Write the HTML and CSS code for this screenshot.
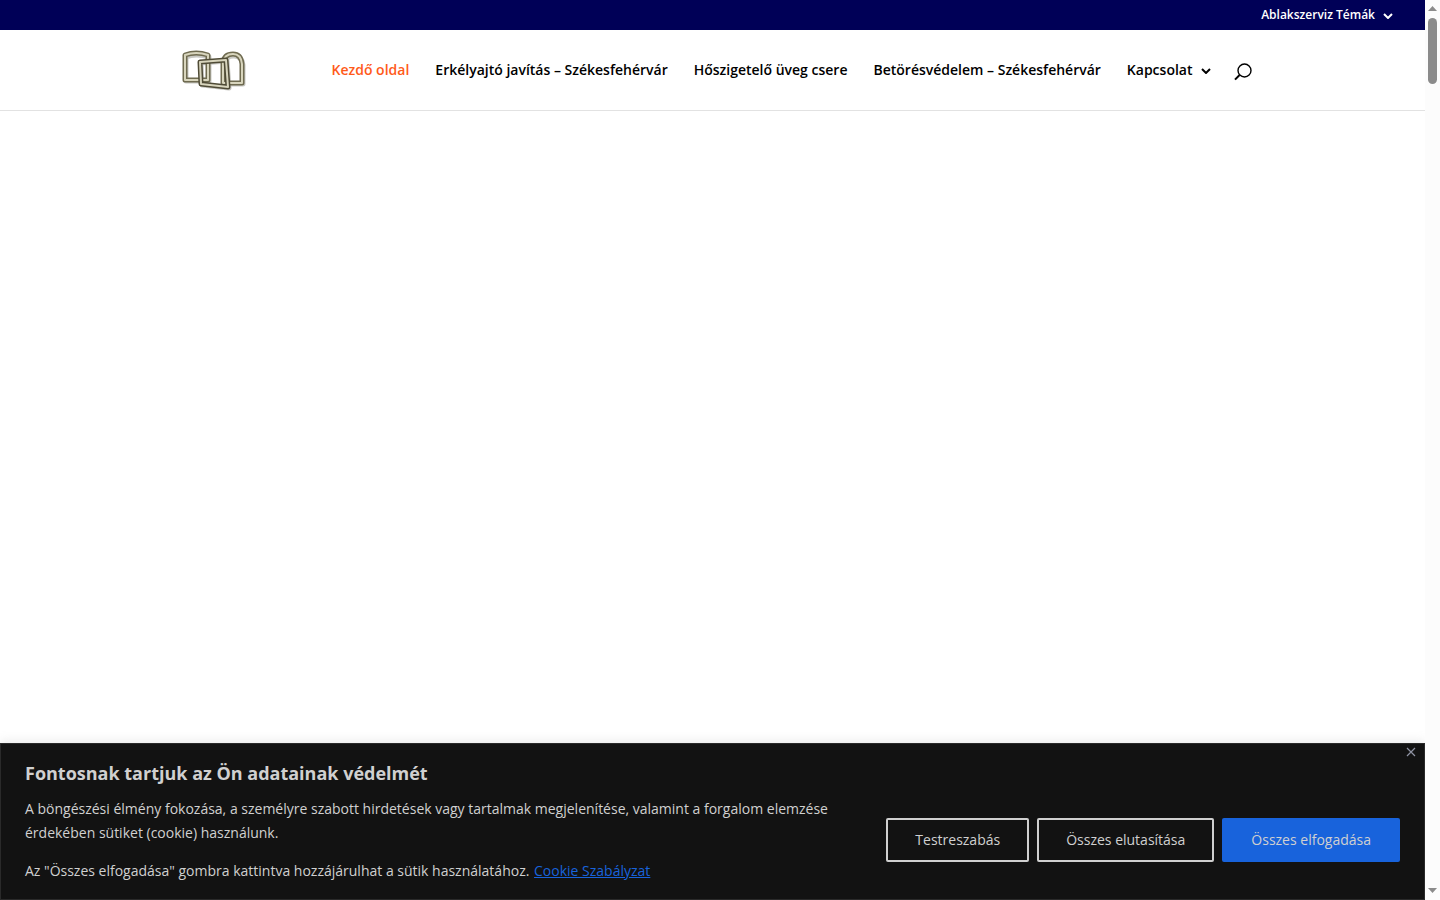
FILE: index.html
```
<!DOCTYPE html>
<html lang="hu">
<head>
  <meta charset="UTF-8" />
  <meta name="viewport" content="width=device-width, initial-scale=1.0" />
  <title>Ablakszerviz - Kezdő oldal</title>
  <link rel="stylesheet" href="styles.css">
</head>
<body>
  <div class="page">
    <div class="top-bar">
      <a href="#">Ablakszerviz Témák
        <svg class="chevron" viewBox="0 0 10 6" width="10" height="6"><path d="M1 1l4 4 4-4" /></svg>
      </a>
    </div>
    <header>
      <div class="container">
        <a class="logo" href="#" aria-label="Ablakszerviz">
          <svg viewBox="0 0 66 42" width="66" height="42">
            <g class="frame-shadow">
              <path d="M5 8Q15 4 28 8V32H5Z" />
              <path d="M43 35V15Q44 7 53 7Q61 7 62 16V35Z" />
              <path d="M20 14L46 12L48 39L21 36Z" />
            </g>
            <g class="frame-edge">
              <path d="M4 6Q15 2 27 6V31H4Z" />
              <path d="M42 34V14Q43 5 52 5Q60 5 61 15V34Z" />
            </g>
            <g class="frame-light">
              <path d="M4 6Q15 2 27 6V31H4Z" />
              <path d="M42 34V14Q43 5 52 5Q60 5 61 15V34Z" />
            </g>
            <path class="frame-front" d="M19 13L45 11L47 38L20 35Z" />
            <path class="frame-light" d="M19 13L45 11L47 38L20 35Z" />
          </svg>
        </a>
        <nav>
          <a class="active" href="#">Kezdő oldal</a>
          <a href="#">Erkélyajtó javítás – Székesfehérvár</a>
          <a href="#">Hőszigetelő üveg csere</a>
          <a href="#">Betörésvédelem – Székesfehérvár</a>
          <a href="#">Kapcsolat
            <svg class="chevron" viewBox="0 0 10 6" width="10" height="6"><path d="M1 1l4 4 4-4" /></svg>
          </a>
          <button class="search" type="button" aria-label="Keresés">
            <svg viewBox="0 0 18 18" width="18" height="18"><circle cx="10.5" cy="7.5" r="6.5" /><path class="handle" d="M5.600 12L1 16.600" /></svg>
          </button>
        </nav>
      </div>
    </header>
    <main></main>
    <section class="cookie" aria-labelledby="cookie-title">
      <button class="close" type="button" aria-label="Bezárás">
        <svg viewBox="0 0 10 10" width="10" height="10"><path d="M1 1l8 8M9 1l-8 8" /></svg>
      </button>
      <h2 id="cookie-title">Fontosnak tartjuk az Ön adatainak védelmét</h2>
      <div class="cookie-body">
        <div class="cookie-text">
          <p>A böngészési élmény fokozása, a személyre szabott hirdetések vagy tartalmak megjelenítése, valamint a forgalom elemzése érdekében sütiket (cookie) használunk.</p>
          <p>Az "Összes elfogadása" gombra kattintva hozzájárulhat a sütik használatához. <a href="#">Cookie Szabályzat</a></p>
        </div>
        <div class="cookie-buttons">
          <button class="btn" type="button">Testreszabás</button>
          <button class="btn" type="button">Összes elutasítása</button>
          <button class="btn btn-accept" type="button">Összes elfogadása</button>
        </div>
      </div>
    </section>
  </div>
  <div class="scrollbar" aria-hidden="true">
    <svg viewBox="0 0 9 5" width="9" height="5"><path d="M0 5L4.500 0L9 5Z" /></svg>
    <div class="thumb"></div>
    <svg class="down" viewBox="0 0 9 5" width="9" height="5"><path d="M0 0H9L4.500 5Z" /></svg>
  </div>
</body>
</html>
```
FILE: styles.css
```
:root {
  --top-bg: #000057;
  --accent: #ff5a1a;
  --cookie-bg: #121212;
  --cookie-text: #d0d0d0;
  --blue: #1863dc;
}
* { box-sizing: border-box; margin: 0; padding: 0; }
body { display: flex; min-height: 100vh; font-family: "Open Sans", Arial, sans-serif; font-size: 14px; background: #fff; color: #000; }
a { color: inherit; text-decoration: none; }
button { font: inherit; border: 0; background: none; cursor: pointer; }
svg { display: block; }
.page { flex: 1; min-width: 0; display: flex; flex-direction: column; }

.top-bar { display: flex; justify-content: flex-end; height: 30px; padding: 0 32px; background: var(--top-bg); color: #fff; font-size: 12px; font-weight: 600; line-height: 28px; }
.top-bar a, nav a { display: flex; align-items: center; gap: 8px; white-space: nowrap; }
.chevron { fill: none; stroke: currentColor; stroke-width: 2; margin-top: 1px; }

header { border-bottom: 1px solid #e2e2e2; }
.container { display: flex; align-items: center; justify-content: space-between; width: 80%; max-width: 1080px; min-width: 1080px; height: 80px; margin: 0 auto; padding-left: 8px; }
.logo path { fill: none; stroke-linejoin: round; }
.logo .frame-shadow { stroke: #c9c9c4; stroke-width: 5; }
.logo .frame-edge { stroke: #6f6b50; stroke-width: 5; }
.logo .frame-front { stroke: #4f4b36; stroke-width: 5; }
.logo .frame-light { stroke: #d8d5bd; stroke-width: 2; }
nav { display: flex; align-items: center; gap: 26px; font-weight: 600; line-height: 20px; }
nav .active { color: var(--accent); }
.search { margin: 3px 1px 0 -3px; }
.search svg { fill: none; stroke: #000; stroke-width: 1.4; }
.search .handle { stroke-width: 2; }

main { flex: 1; }

.cookie { position: relative; padding: 17px 24px 16px; background: var(--cookie-bg); border: 1px solid #2a2a2a; color: var(--cookie-text); box-shadow: 0 -1px 10px rgba(172, 171, 171, 0.3); line-height: 24px; }
.cookie h2 { margin-bottom: 11px; font-size: 18px; line-height: 25px; }
.cookie-body { display: flex; align-items: center; gap: 40px; }
.cookie-text { flex: 1; }
.cookie-text p + p { margin-top: 14px; }
.cookie-text a { margin-left: 1px; color: var(--blue); text-decoration: underline; }
.cookie-buttons { display: flex; gap: 8px; }
.btn { padding: 8px 27px; border: 2px solid var(--cookie-text); border-radius: 2px; color: var(--cookie-text); white-space: nowrap; }
.btn-accept { background: var(--blue); border-color: var(--blue); }
.close { position: absolute; top: 3px; right: 8px; }
.close svg { fill: none; stroke: #8f93a3; stroke-width: 1.2; }

.scrollbar { position: sticky; top: 0; display: flex; flex-direction: column; align-items: center; gap: 7px; width: 15px; height: 100vh; padding: 6px 0 7px; background: #fcfcfc; }
.scrollbar svg { fill: #8b8b8b; }
.scrollbar .down { margin-top: auto; }
.thumb { width: 9px; height: 66px; border-radius: 5px; background: #8b8b8b; }
@media (max-width: 1100px) {
  .container { min-width: 0; width: 90%; height: auto; flex-wrap: wrap; }
  nav, .cookie-body, .cookie-buttons { flex-wrap: wrap; }
}
```
